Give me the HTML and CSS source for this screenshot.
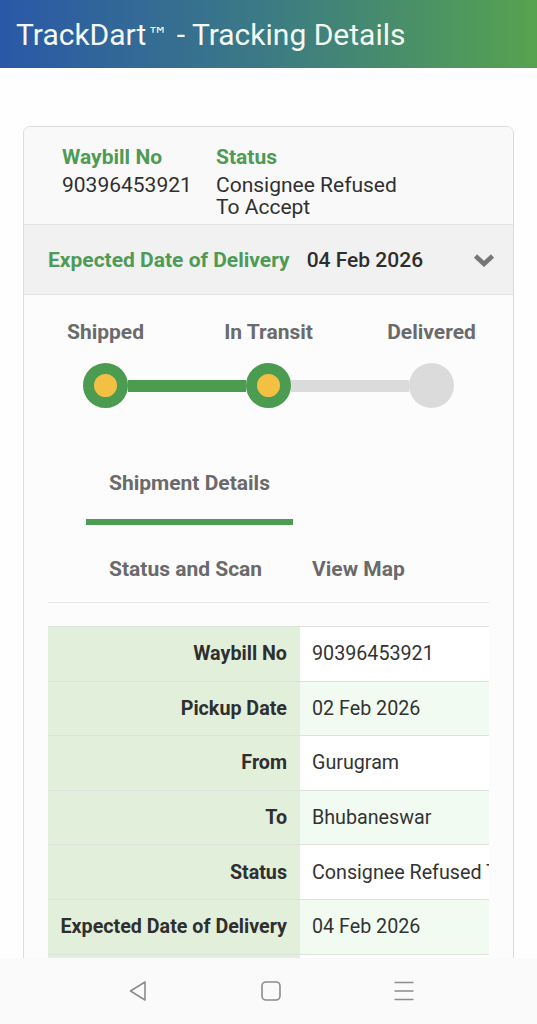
FILE: index.html
```html
<!DOCTYPE html>
<html lang="en">
<head>
<meta charset="utf-8">
<title>TrackDart - Tracking Details</title>
<link rel="stylesheet" href="styles.css">
</head>
<body>
<header class="appbar">
  <h1 class="appbar-title">TrackDart<span class="tm">™</span> - Tracking Details</h1>
</header>
<main class="page">
  <section class="card">
    <div class="summary">
      <div class="sum-col">
        <div class="sum-label">Waybill No</div>
        <div class="sum-value">90396453921</div>
      </div>
      <div class="sum-col">
        <div class="sum-label">Status</div>
        <div class="sum-value">Consignee Refused<br>To Accept</div>
      </div>
    </div>
    <div class="edd-bar">
      <span class="edd-label">Expected Date of Delivery</span>
      <span class="edd-date">04 Feb 2026</span>
      <svg class="edd-chevron" width="22" height="14" viewBox="0 0 22 14"><path d="M2.5 3 L11 11 L19.5 3" fill="none" stroke="#777" stroke-width="4.5" stroke-linecap="butt" stroke-linejoin="miter"/></svg>
    </div>
    <div class="progress">
      <div class="step-labels">
        <span class="step-label">Shipped</span>
        <span class="step-label">In Transit</span>
        <span class="step-label">Delivered</span>
      </div>
      <div class="track">
        <span class="dot done"></span>
        <span class="seg done"></span>
        <span class="dot done"></span>
        <span class="seg"></span>
        <span class="dot"></span>
      </div>
    </div>
    <div class="tabs">
      <div class="tab-row">
        <span class="tab active">Shipment Details</span>
      </div>
      <div class="tab-row">
        <span class="tab">Status and Scan</span>
        <span class="tab">View Map</span>
      </div>
    </div>
    <div class="table-wrap">
      <table class="details">
        <colgroup><col class="col-label"><col class="col-value"></colgroup>
        <tr><th>Waybill No</th><td>90396453921</td></tr>
        <tr><th>Pickup Date</th><td>02 Feb 2026</td></tr>
        <tr><th>From</th><td>Gurugram</td></tr>
        <tr><th>To</th><td>Bhubaneswar</td></tr>
        <tr><th>Status</th><td>Consignee Refused To Accept</td></tr>
        <tr><th>Expected Date of Delivery</th><td>04 Feb 2026</td></tr>
        <tr><th>Current Location</th><td>Bhubaneswar</td></tr>
      </table>
    </div>
  </section>
</main>
<nav class="sysnav">
  <svg class="nav-icon" width="24" height="24" viewBox="0 0 24 24"><path d="M19 3 L4.5 12 L19 21 Z" fill="none" stroke="#8c8c8c" stroke-width="1.6" stroke-linejoin="round"/></svg>
  <svg class="nav-icon" width="24" height="24" viewBox="0 0 24 24"><rect x="3" y="3" width="18" height="18" rx="4" fill="none" stroke="#8c8c8c" stroke-width="1.6"/></svg>
  <svg class="nav-icon" width="24" height="24" viewBox="0 0 24 24"><path d="M2.5 3.5 H21.5 M2.5 12 H21.5 M2.5 20.5 H21.5" fill="none" stroke="#8c8c8c" stroke-width="1.6"/></svg>
</nav>
</body>
</html>
```
FILE: styles.css
```css
* { box-sizing: border-box; }
html, body { margin: 0; padding: 0; }
body {
  background: #fefefe;
  font-family: Roboto, "Noto Sans", "Liberation Sans", sans-serif;
  color: #333;
  overflow: hidden;
  height: 1024px;
}
.appbar {
  height: 68px;
  overflow: hidden;
  background: linear-gradient(to right, #2a58a8 0%, #3b7b84 50%, #56a34f 100%);
}
.appbar-title {
  margin: 0;
  padding-left: 16px;
  line-height: 69px;
  font-size: 30px;
  font-weight: 400;
  color: #f4f8f4;
  letter-spacing: 0;
  white-space: nowrap;
}
.tm {
  font-family: "DejaVu Sans", sans-serif;
  font-size: 21px;
  line-height: 0;
  vertical-align: 3px;
  margin: 0 1px;
}
.page { padding-top: 58px; }
.card {
  margin: 0 23px;
  border: 1px solid #dcdcdc;
  border-radius: 7px;
  background: #fcfcfc;
  height: 900px;
  overflow: hidden;
}
.summary {
  display: grid;
  grid-template-columns: 154px auto;
  padding: 19px 0 6px 38px;
  background: #f9f9f9;
}
.sum-label {
  color: #4f9b56;
  font-weight: 700;
  font-size: 21px;
  line-height: 22px;
}
.sum-value {
  font-size: 21px;
  line-height: 22px;
  margin-top: 6px;
  color: #303030;
}
.edd-bar {
  display: flex;
  align-items: center;
  height: 71px;
  padding: 0 18px 0 24px;
  background: #f1f1f1;
  border-top: 1px solid #e2e2e2;
  border-bottom: 1px solid #e2e2e2;
}
.edd-label {
  color: #4f9b56;
  font-weight: 700;
  font-size: 21px;
}
.edd-date {
  margin-left: 17px;
  font-size: 21px;
  font-weight: 500;
  color: #2e2e2e;
}
.edd-chevron { margin-left: auto; }
.progress { padding-top: 25px; }
.step-labels {
  display: grid;
  grid-template-columns: 1fr 1fr 1fr;
  text-align: center;
}
.step-label {
  font-size: 21px;
  line-height: 24px;
  font-weight: 700;
  color: #6b6b6b;
}
.track {
  display: flex;
  align-items: center;
  margin: 19px calc(100% / 6 - 22px) 0;
}
.dot {
  flex: none;
  width: 45px;
  height: 45px;
  border-radius: 50%;
  background: #dcdbdb;
}
.dot.done {
  background: #f4c043;
  border: 11.5px solid #4b9c50;
}
.seg {
  flex: 1;
  height: 12px;
  background: #dcdbdb;
}
.seg.done { background: #4b9c50; }
.tabs {
  margin: 34px 24px 0;
  border-bottom: 1px solid #e8e8e8;
}
.tab-row { display: flex; margin-left: 38px; }
.tab {
  padding: 29px 23px 24px;
  font-size: 21px;
  line-height: 24px;
  font-weight: 700;
  color: #6a6a6a;
  border-bottom: 6px solid transparent;
}
.tab.active { border-bottom-color: #4b9c50; }
.tab-row + .tab-row .tab { padding: 32px 24px 21px 23px; border-bottom: 0; }
.tab-row + .tab-row .tab + .tab { padding-left: 26px; }
.table-wrap {
  margin: 23px 24px 0;
  overflow: hidden;
}
.details {
  table-layout: fixed;
  width: 530px;
  border-collapse: collapse;
  font-size: 19.7px;
  white-space: nowrap;
}
.col-label { width: 252px; }
.details tr { height: 54.6px; border-top: 1px solid #dde3db; border-bottom: 1px solid #dde3db; }
.details th {
  text-align: right;
  padding: 0 13px 0 0;
  background: #e2efdb;
  color: #2f2f2f;
  font-weight: 700;
}
.details td {
  padding: 0 12px;
  background: #ffffff;
  color: #333;
  font-weight: 400;
  overflow: hidden;
}
.details tr:nth-child(even) td { background: #f2fbf1; }
.sysnav {
  position: fixed;
  left: 0;
  right: 0;
  bottom: 0;
  height: 66px;
  background: #fafafa;
  display: flex;
  align-items: center;
  justify-content: center;
  gap: 109px;
  padding-left: 5px;
}
.nav-icon { display: block; }
```
